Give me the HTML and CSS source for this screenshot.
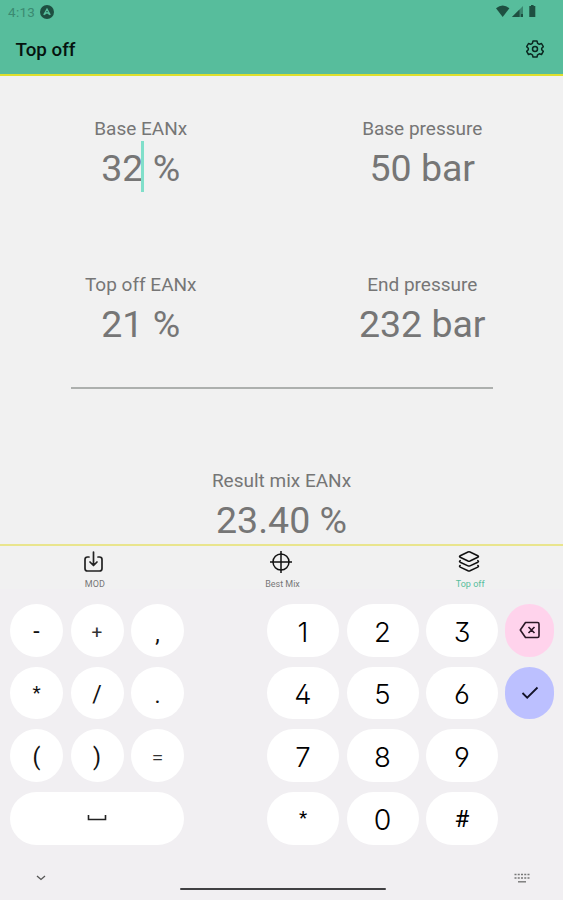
FILE: index.html
```html
<!DOCTYPE html>
<html lang="en">
<head>
<meta charset="utf-8">
<title>Top off</title>
<link rel="stylesheet" href="styles.css">
</head>
<body>
<header class="header">
  <div class="status">
    <span class="clock">4:13</span>
    <svg class="app-dot" width="14" height="14" viewBox="0 0 14 14"><circle cx="7" cy="7" r="7" fill="#1e4f41"/><path d="M3.8 9.8 7 4l3.2 5.8L7 7.6z" fill="none" stroke="#57bd9c" stroke-width="1.3"/></svg>
    <svg class="signals" width="42" height="13" viewBox="0 0 42 13"><g fill="#1e4f41"><path d="M0 3.2Q6.7-2 13.400 3.200L6.700 12z"/><path d="M27 1v11H16z" opacity=".5"/><path d="M23.500 4.500V12H16z"/><path d="M25 9h2v3h-2z"/><path d="M33.300 1h1.700V0h2.600v1h1.700v11h-6z"/></g></svg>
  </div>
  <div class="title-row">
    <h1>Top off</h1>
    <svg width="18" height="18" viewBox="0 0 18 18" fill="none" stroke="#0b2820" stroke-width="1.500" stroke-linejoin="round"><path d="m7 1h4l.6 2.300 1.700 1L15.500 3.500l1.800 3.200L15.700 8.300v1.500l1.600 1.600-1.800 3.100-2.200-.7-1.700 1L11 17H7l-.6-2.200-1.700-1-2.200.7L.7 11.400l1.600-1.600V8.300L.7 6.700 2.500 3.500l2.200.8 1.700-1z"/><circle cx="9" cy="9" r="2.500"/></svg>
  </div>
</header>
<main class="content">
  <div class="grid">
    <div class="field"><div class="label">Base EANx</div><div class="value"><span class="edit">32</span> %</div></div>
    <div class="field"><div class="label">Base pressure</div><div class="value">50 bar</div></div>
    <div class="field"><div class="label">Top off EANx</div><div class="value">21 %</div></div>
    <div class="field"><div class="label">End pressure</div><div class="value">232 bar</div></div>
  </div>
  <hr class="rule">
  <div class="field result"><div class="label">Result mix EANx</div><div class="value">23.40 %</div></div>
</main>
<nav class="tabs">
  <div class="tab"><svg width="22" height="22" viewBox="0 0 22 22" fill="none" stroke="#222" stroke-width="1.700" stroke-linecap="round" stroke-linejoin="round"><path d="M6 6H4.500Q2 6 2 8.500v9Q2 20 4.500 20h12q2.500 0 2.500-2.500v-9Q19 6 16.500 6H15M10.500 1v13M7 11l3.500 3.500L14 11"/></svg><span>MOD</span></div>
  <div class="tab"><svg width="22" height="22" viewBox="0 0 22 22" fill="none" stroke="#111" stroke-width="1.500"><circle cx="11" cy="11" r="8"/><path d="M11 0v22M0 11h22"/></svg><span>Best Mix</span></div>
  <div class="tab active"><svg width="22" height="22" viewBox="0 0 22 22" fill="none" stroke="#111" stroke-width="1.500" stroke-linejoin="round" stroke-linecap="round"><path d="M10 1q1-.4 2 0L19.800 4.700q1.400.8 0 1.600L12 10q-1 .4-2 0L2.200 6.300q-1.400-.8 0-1.600zM2.200 9.600q-1.400.8 0 1.600L10 14.900q1 .4 2 0l7.800-3.700q1.400-.8 0-1.600M2.200 14.500q-1.400.8 0 1.600L10 19.800q1 .4 2 0l7.800-3.700q1.400-.8 0-1.600"/></svg><span>Top off</span></div>
</nav>
<section class="keyboard">
  <div class="keys">
    <div class="symbols">
      <button>-</button><button class="thin plus">+</button><button class="comma">,</button>
      <button class="star">*</button><button>/</button><button class="dot">.</button>
      <button>(</button><button>)</button><button class="thin">=</button>
      <button class="space"><svg width="20" height="8" viewBox="0 0 20 8"><path d="M1.500 1v4.500h17V1" fill="none" stroke="#222" stroke-width="1.600"/></svg></button>
    </div>
    <div class="digits">
      <button>1</button><button>2</button><button>3</button>
      <button>4</button><button>5</button><button>6</button>
      <button>7</button><button>8</button><button>9</button>
      <button class="sym star">*</button><button class="zero">0</button><button class="sym hash">#</button>
    </div>
    <div class="actions">
      <button class="erase"><svg width="22" height="18" viewBox="0 0 22 18" fill="none" stroke="#2a1825" stroke-width="1.600" stroke-linejoin="round"><path d="M6.500 1.500h12q1.500 0 1.500 1.500v12q0 1.500-1.500 1.500h-12L1.300 9zM9.500 6l6 6M15.500 6l-6 6"/></svg></button>
      <button class="enter"><svg width="18" height="14" viewBox="0 0 18 14"><path d="m1.500 7 4.700 4.700L16.500 1.500" fill="none" stroke="#14142a" stroke-width="1.800"/></svg></button>
    </div>
  </div>
  <footer class="navbar">
    <svg width="10" height="6" viewBox="0 0 10 6"><path d="m1 1 4 3.500L9 1" fill="none" stroke="#555" stroke-width="1.300"/></svg>
    <div class="home"></div>
    <svg width="16" height="10" viewBox="0 0 16 10" fill="none" stroke="#777" stroke-width="1.700"><path d="M.5 1.500h15M.5 5h15" stroke-dasharray="2 1.250"/><path d="M4 8.800h8" stroke-width="1.400"/></svg>
  </footer>
</section>
</body>
</html>
```
FILE: styles.css
```css
* { box-sizing: border-box; }
body { margin: 0; width: 563px; height: 900px; overflow: hidden; display: flex; flex-direction: column; background: #f1f1f1; font-family: Roboto, sans-serif; }
.header { height: 76px; flex: none; background: #57bd9c; border-bottom: 2px solid #dfdf2c; }
.status { height: 24px; display: flex; align-items: center; padding: 0 25px 0 8px; }
.clock { font-size: 13.5px; letter-spacing: .3px; color: #3b8a71; width: 32px; }
.signals { margin-left: auto; margin-top: -2px; }
.title-row { display: flex; justify-content: space-between; align-items: center; height: 50px; padding: 0 19px 0 15.5px; }
h1 { margin: 2px 0 0; font-size: 18.8px; font-weight: 500; line-height: 24px; color: #06130f; }
.content { height: 468px; flex: none; padding-top: 40.5px; color: #767676; }
.grid { display: grid; grid-template-columns: 1fr 1fr; grid-auto-rows: 156px; }
.field { text-align: center; }
.label { font-size: 19px; line-height: 24px; }
.value { font-size: 37.5px; line-height: 50px; margin-top: 2.500px; }
.edit { position: relative; }
.edit::after { content: ""; position: absolute; right: -1px; top: -5px; width: 3px; height: 51px; background: #80dfca; }
.rule { width: 422px; height: 2px; border: 0; margin: -41.500px auto 0; background: #adb0ae; }
.result { margin-top: 79.500px; }
.tabs { height: 45px; flex: none; border-top: 2px solid #e9e58d; display: grid; grid-template-columns: repeat(3, 1fr); }
.tab { display: flex; flex-direction: column; align-items: center; padding-top: 5px; font-size: 9px; line-height: 12px; gap: 5px; color: #777; }
.tab span { padding-left: 2px; }
.tab.active { color: #57bd9c; }
.keyboard { flex: 1; background: #f1eff2; padding-top: 15px; }
.keys { display: flex; height: 256px; padding: 0 9px 0 10px; }
.symbols, .digits, .actions { display: grid; grid-auto-rows: 52.500px; row-gap: 10.200px; align-content: start; }
.symbols { width: 174px; grid-template-columns: repeat(3, 53px); column-gap: 7.500px; }
.digits { width: 231px; grid-template-columns: repeat(3, 72px); column-gap: 7.500px; margin-left: 83px; }
.actions { width: 49px; margin-left: auto; }
button { border: 0; padding: 3px 0 0; border-radius: 27px; background: #fff; color: #111; display: flex; align-items: center; justify-content: center; font: 23px Roboto, sans-serif; }
.digits button { font: 300 27.500px Inter, sans-serif; font-feature-settings: "ss01"; color: #000; }
.digits .zero { font-size: 28.500px; }
.digits .sym { font: 22px Roboto, sans-serif; }
.digits .hash { font-size: 24px; padding-top: 2px; }
.symbols .star, .digits .star { font-size: 19px; padding: 0 0 1px; }
.symbols .comma { padding-top: 8px; }
.symbols .dot { padding-top: 6px; }
.symbols .thin { font-size: 21px; font-weight: 300; color: #333; }
.symbols .plus { font-size: 19px; font-weight: 400; padding-top: 5px; }
.space { grid-column: span 3; padding: 0; }
.erase { background: #ffd3ec; padding: 0; }
.enter { background: #bcc0ff; padding: 0; }
.navbar { display: grid; grid-template-columns: 1fr 205px 1fr; align-items: center; padding: 0 33px 0 36px; height: 36px; }
.navbar svg:last-child { justify-self: end; }
.home { height: 2px; margin-top: 22px; margin-left: -1px; background: #414043; border-radius: 1px; }
```
